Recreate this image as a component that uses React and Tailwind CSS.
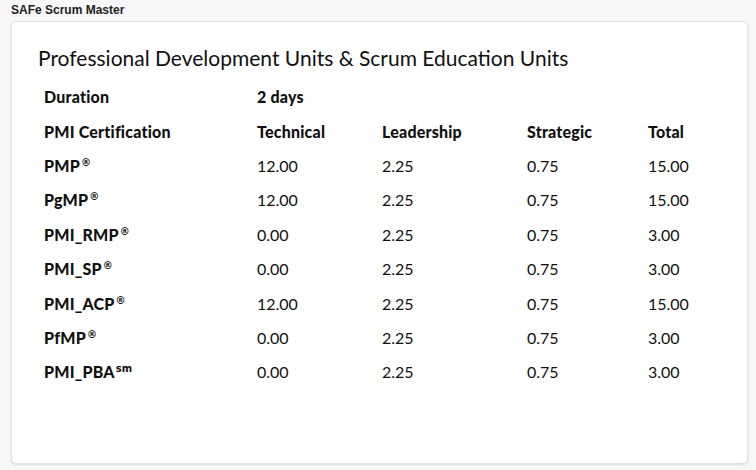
const ROWS = [
  { name: 'PMP', mark: '®', technical: '12.00', leadership: '2.25', strategic: '0.75', total: '15.00' },
  { name: 'PgMP', mark: '®', technical: '12.00', leadership: '2.25', strategic: '0.75', total: '15.00' },
  { name: 'PMI_RMP', mark: '®', technical: '0.00', leadership: '2.25', strategic: '0.75', total: '3.00' },
  { name: 'PMI_SP', mark: '®', technical: '0.00', leadership: '2.25', strategic: '0.75', total: '3.00' },
  { name: 'PMI_ACP', mark: '®', technical: '12.00', leadership: '2.25', strategic: '0.75', total: '15.00' },
  { name: 'PfMP', mark: '®', technical: '0.00', leadership: '2.25', strategic: '0.75', total: '3.00' },
  { name: 'PMI_PBA', mark: 'sm', technical: '0.00', leadership: '2.25', strategic: '0.75', total: '3.00' },
];

// fixed column tracks, measured off the screenshot
const GRID = 'grid grid-cols-[213px_125px_145px_121px_1fr] items-center h-[34.4px]';

export default function App() {
  return (
    <div className="w-[756px] h-[470px] bg-[#f7f7f9] overflow-hidden font-['Lato','Liberation_Sans',sans-serif] text-[#111]">
      <p className="pl-[11px] pt-[3px] h-[21px] text-[12px] leading-[14px] font-bold text-[#222] font-['Liberation_Sans',sans-serif]">
        SAFe Scrum Master
      </p>
      <div className="ml-[11px] w-[737px] h-[443px] bg-white border border-[#e2e2e4] rounded-[5px] shadow-[0_1px_2px_rgba(0,0,0,0.12)]">
        <h1 className="pl-[26px] pt-[23px] text-[21px] leading-[26px] font-normal text-[#111]">
          Professional Development Units &amp; Scrum Education Units
        </h1>
        <div className="pl-[32px] pt-[9px] text-[16px]">
          <div className={`${GRID} font-black tracking-[0.2px]`}>
            <span>Duration</span>
            <span>2 days</span>
          </div>
          <div className={`${GRID} font-black tracking-[0.2px]`}>
            <span>PMI Certification</span>
            <span>Technical</span>
            <span>Leadership</span>
            <span>Strategic</span>
            <span>Total</span>
          </div>
          {ROWS.map((r) => (
            <div key={r.name} className={GRID}>
              <span className="font-black tracking-[0.2px]">
                {r.name}
                {/* DejaVu for the mark so it doesn't fall back to a colour emoji */}
                <sup className="font-['DejaVu_Sans',sans-serif] font-bold text-[10px] ml-[1px] top-[-0.6em] text-[#111]">
                  {r.mark}
                </sup>
              </span>
              <span>{r.technical}</span>
              <span>{r.leadership}</span>
              <span>{r.strategic}</span>
              <span>{r.total}</span>
            </div>
          ))}
        </div>
      </div>
    </div>
  );
}
